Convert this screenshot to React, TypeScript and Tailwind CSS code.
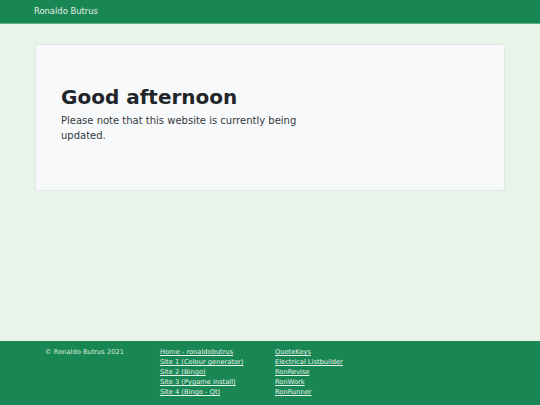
export default function App() {
  const sites = [
    "Home - ronaldobutrus",
    "Site 1 (Colour generator)",
    "Site 2 (Bingo)",
    "Site 3 (Pygame install)",
    "Site 4 (Bingo - Qt)",
  ];
  const apps = ["QuoteKeys", "Electrical Listbuilder", "RonRevise", "RonWork", "RonRunner"];

  return (
    <div className="min-h-screen flex flex-col bg-[#e8f3e9] font-['DejaVu_Sans',sans-serif]">
      {/* Navbar */}
      <nav className="h-[24px] bg-[#198754] border-b border-[#5fb37f] flex items-center px-[34px]">
        <span className="text-[8.4px] text-[#e3efe7]">Ronaldo Butrus</span>
      </nav>

      {/* Main */}
      <main className="flex-1 px-[35px] pt-[20px]">
        <div className="bg-[#f8f9fa] border border-[#e1e7e2] rounded-[3px] px-[25px] pt-[40px] pb-[47px]">
          <h1 className="text-[20px] leading-[24px] font-bold text-[#212529]">Good afternoon</h1>
          <p className="mt-[4px] w-[260px] text-[10px] leading-[15px] text-[#343a40]">
            Please note that this website is currently being updated.
          </p>
        </div>
      </main>

      {/* Footer */}
      <footer className="bg-[#198754] pt-[6px] pb-[8px] pl-[45px] flex text-[6.7px] leading-[10px] text-[#d9ebdf]">
        <div className="w-[115px]">© Ronaldo Butrus 2021</div>
        <ul className="w-[115px]">
          {sites.map((s) => (
            <li key={s}>
              <a href="#" className="underline text-[#e6f2ea]">{s}</a>
            </li>
          ))}
        </ul>
        <ul>
          {apps.map((s) => (
            <li key={s}>
              <a href="#" className="underline text-[#e6f2ea]">{s}</a>
            </li>
          ))}
        </ul>
      </footer>
    </div>
  );
}
